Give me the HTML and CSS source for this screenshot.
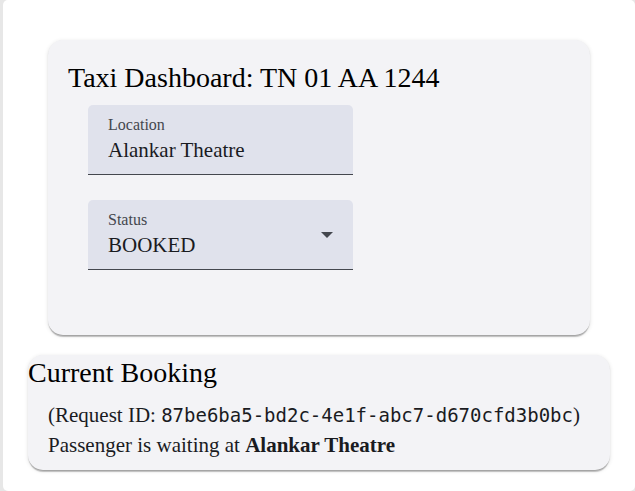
FILE: index.html
```html
<!DOCTYPE html>
<html lang="en">
<head>
<meta charset="utf-8">
<title>Taxi Dashboard</title>
<link rel="stylesheet" href="styles.css">
</head>
<body>
<main class="page">
  <section class="card dashboard">
    <h1 class="title">Taxi Dashboard: TN 01 AA 1244</h1>
    <form class="fields">
      <div class="field">
        <label class="label" for="location">Location</label>
        <input class="control" id="location" type="text" value="Alankar Theatre">
      </div>
      <div class="field">
        <label class="label" for="status">Status</label>
        <select class="control" id="status">
          <option selected>BOOKED</option>
          <option>AVAILABLE</option>
        </select>
        <svg class="arrow" viewBox="0 0 12 6" aria-hidden="true"><path d="M0 0h12L6 6z"/></svg>
      </div>
    </form>
  </section>
  <section class="card">
    <h2 class="title">Current Booking</h2>
    <div class="details">
      <p class="line">(Request ID: <code class="code">87be6ba5-bd2c-4e1f-abc7-d670cfd3b0bc</code>)</p>
      <p class="line">Passenger is waiting at <strong>Alankar Theatre</strong></p>
    </div>
  </section>
</main>
</body>
</html>
```
FILE: styles.css
```css
* {
  box-sizing: border-box;
}

body {
  margin: 0;
  padding-left: 3px;
  background: #e7e7e7;
  color: #1a1b1f;
  font-family: "Liberation Serif", "Times New Roman", serif;
}

.page {
  display: flex;
  flex-direction: column;
  gap: 20px;
  min-height: 100vh;
  padding: 40px 25px 20px;
  border-radius: 5px;
  background: #fff;
}

.card {
  border-radius: 15px;
  background: #f3f3f6;
  box-shadow: 0 3px 1px -1px rgba(0, 0, 0, 0.2),
    0 1px 1px rgba(0, 0, 0, 0.14),
    0 1px 4px rgba(0, 0, 0, 0.12);
}

.dashboard {
  margin: 0 20px;
  padding: 20px;
}

.title {
  margin: 0;
  color: #000;
  font-size: 28px;
  font-weight: 400;
  line-height: 35px;
}

.fields {
  display: flex;
  flex-direction: column;
  gap: 25px;
  padding: 10px 20px 45px;
}

.field {
  position: relative;
  width: 265px;
  max-width: 100%;
  height: 70px;
  padding: 10px 20px;
  border-bottom: 1px solid #44474e;
  border-radius: 5px 5px 0 0;
  background: #e0e2ec;
}

.label {
  display: block;
  color: #44474e;
  font-size: 16px;
  line-height: 20px;
}

.control {
  display: block;
  width: 100%;
  height: 30px;
  margin: 0;
  padding: 0;
  border: 0;
  outline: 0;
  appearance: none;
  background: transparent;
  color: inherit;
  font-family: inherit;
  font-size: 21px;
  line-height: 30px;
}

.arrow {
  position: absolute;
  top: 32px;
  right: 20px;
  width: 12px;
  height: 6px;
  fill: #44474e;
  pointer-events: none;
}

.details {
  padding: 10px 20px;
}

.line {
  margin: 0;
  font-size: 21px;
  line-height: 30px;
}

.code {
  font-family: "DejaVu Sans Mono", monospace;
  font-size: 19px;
  line-height: 20px;
}
```
